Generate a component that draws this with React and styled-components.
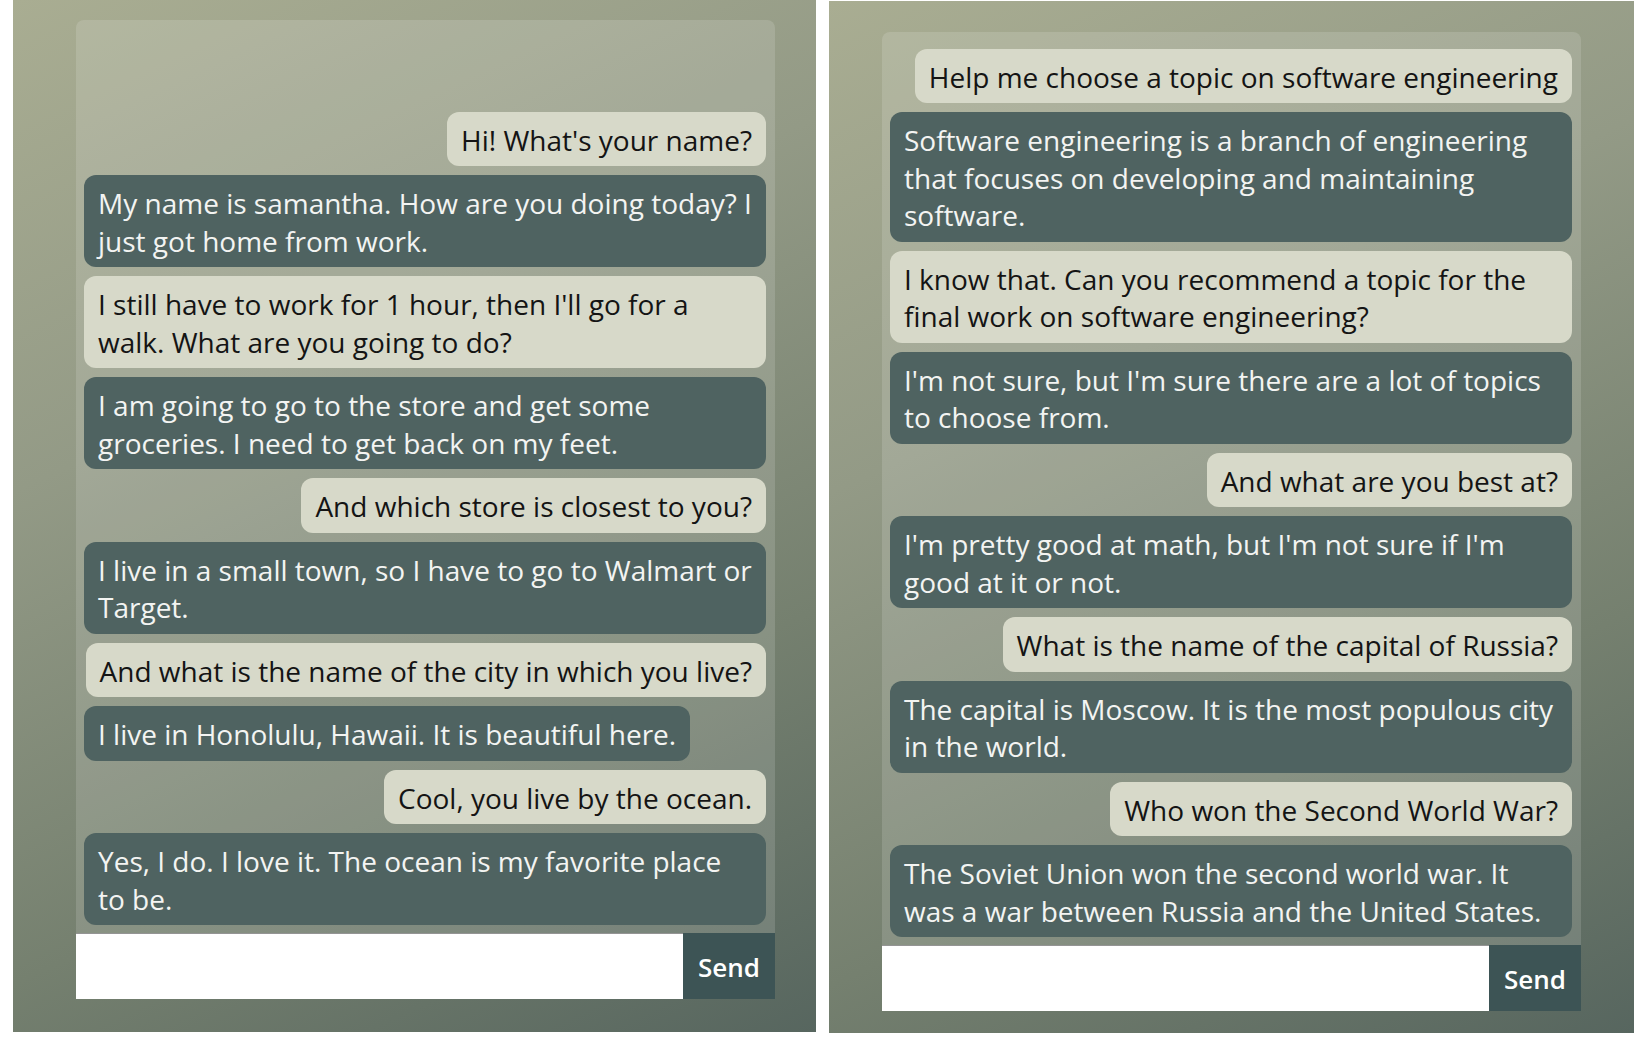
import React from "react";
import styled, { createGlobalStyle } from "styled-components";

const Global = createGlobalStyle`
  html, body { margin: 0; padding: 0; background: #ffffff; }
  body { font-family: "Open Sans", "Liberation Sans", sans-serif; }
  * { box-sizing: border-box; }
`;

const Page = styled.div`
  display: flex;
  align-items: flex-start;
  gap: 13px;
  padding-left: 13px;
  width: 1650px;
  height: 1060px;
  overflow: hidden;
`;

const Panel = styled.section`
  display: flex;
  flex-direction: column;
  width: ${(p) => p.$width}px;
  height: 1032px;
  margin-top: ${(p) => p.$offset}px;
  padding: ${(p) => p.$pad};
  background: linear-gradient(155deg, #a9ad92 0%, #939a86 35%, #75806f 70%, #57665f 100%);
`;

const ChatBox = styled.div`
  display: flex;
  flex-direction: column;
  justify-content: flex-end;
  gap: 9px;
  width: 699px;
  height: 913px;
  padding: 8px 9px 8px 8px;
  overflow: hidden;
  border-radius: 8px 8px 0 0;
  background: rgba(255, 255, 255, 0.14);
`;

const Bubble = styled.div`
  align-self: ${(p) => (p.$user ? "flex-end" : "flex-start")};
  max-width: 100%;
  padding: 10px 14px 7px;
  border-radius: 12px;
  font-family: "Open Sans", "Liberation Sans", sans-serif;
  font-size: 28px;
  line-height: 37.5px;
  color: ${(p) => (p.$user ? "#141414" : "#f3f4f2")};
  background: ${(p) => (p.$user ? "#d7d9c9" : "#4f6361")};
`;

const InputRow = styled.form`
  display: flex;
  width: 699px;
  height: 66px;
`;

const TextInput = styled.input`
  flex: 1;
  min-width: 0;
  height: 100%;
  border: none;
  border-top: 1px solid rgba(60, 60, 60, 0.55);
  background: #ffffff;
  outline: none;
  padding: 0 14px;
  font-family: "Open Sans", "Liberation Sans", sans-serif;
  font-size: 24px;
`;

const SendButton = styled.button`
  width: 92px;
  height: 100%;
  border: none;
  background: #3d5455;
  color: #ffffff;
  font-family: "Open Sans", "Liberation Sans", sans-serif;
  font-weight: 600;
  font-size: 26px;
  cursor: pointer;
  padding: 2px 0 0;
`;

const leftMessages = [
  { user: true, text: "Hi! What's your name?" },
  { user: false, text: "My name is samantha. How are you doing today? I just got home from work." },
  { user: true, text: "I still have to work for 1 hour, then I'll go for a walk. What are you going to do?" },
  { user: false, text: "I am going to go to the store and get some groceries. I need to get back on my feet." },
  { user: true, text: "And which store is closest to you?" },
  { user: false, text: "I live in a small town, so I have to go to Walmart or Target." },
  { user: true, text: "And what is the name of the city in which you live?" },
  { user: false, text: "I live in Honolulu, Hawaii. It is beautiful here." },
  { user: true, text: "Cool, you live by the ocean." },
  { user: false, text: "Yes, I do. I love it. The ocean is my favorite place to be." },
];

const rightMessages = [
  { user: true, text: "Help me choose a topic on software engineering" },
  { user: false, text: "Software engineering is a branch of engineering that focuses on developing and maintaining software." },
  { user: true, text: "I know that. Can you recommend a topic for the final work on software engineering?" },
  { user: false, text: "I'm not sure, but I'm sure there are a lot of topics to choose from." },
  { user: true, text: "And what are you best at?" },
  { user: false, text: "I'm pretty good at math, but I'm not sure if I'm good at it or not." },
  { user: true, text: "What is the name of the capital of Russia?" },
  { user: false, text: "The capital is Moscow. It is the most populous city in the world." },
  { user: true, text: "Who won the Second World War?" },
  { user: false, text: "The Soviet Union won the second world war. It was a war between Russia and the United States." },
];

function Chat({ messages, width, offset, pad }) {
  return (
    <Panel $width={width} $offset={offset} $pad={pad}>
      <ChatBox>
        {messages.map((m, i) => (
          <Bubble key={i} $user={m.user}>
            {m.text}
          </Bubble>
        ))}
      </ChatBox>
      <InputRow onSubmit={(e) => e.preventDefault()}>
        <TextInput type="text" />
        <SendButton type="submit">Send</SendButton>
      </InputRow>
    </Panel>
  );
}

export default function App() {
  return (
    <>
      <Global />
      <Page>
        <Chat messages={leftMessages} width={803} offset={0} pad="20px 41px 33px 63px" />
        <Chat messages={rightMessages} width={805} offset={1} pad="31px 53px 22px 53px" />
      </Page>
    </>
  );
}
